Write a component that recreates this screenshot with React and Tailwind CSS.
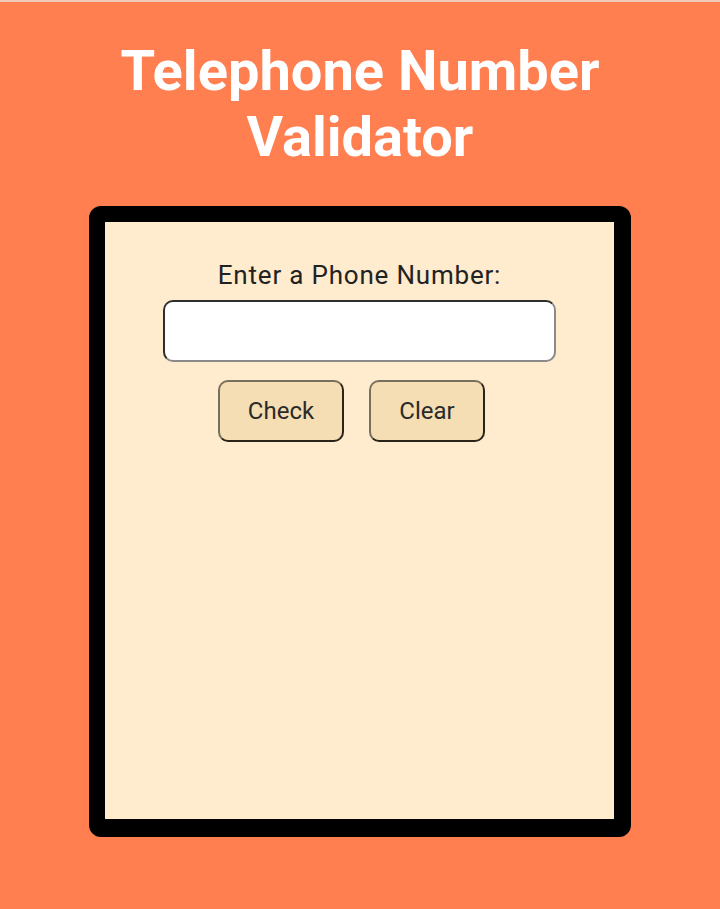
export default function App() {
  return (
    <div className="min-h-[909px] bg-[#ff7f50] border-t-2 border-[#f0c9b8] flex flex-col items-center font-['Roboto',sans-serif]">
      <h1 className="mt-[36px] w-[560px] text-center text-[56px] leading-[66px] font-bold text-white">
        Telephone Number Validator
      </h1>
      <div className="mt-[36px] w-[542px] h-[631px] bg-[#ffebcd] border-[16px] border-b-[18px] border-r-[17px] border-black rounded-[12px] flex flex-col items-center">
        <label className="mt-[38px] text-[26px] leading-[30px] tracking-[0.8px] text-[#222]">
          Enter a Phone Number:
        </label>
        <input
          type="text"
          className="mt-[10px] w-[393px] h-[62px] bg-white rounded-[10px] border-2 border-t-[#2e2e2e] border-l-[#2e2e2e] border-b-[#8a8a8a] border-r-[#8a8a8a] outline-none px-3 text-[20px]"
        />
        <div className="mt-[18px] mr-[16px] flex gap-[25px]">
          <button className="w-[126px] h-[62px] bg-[#f5deb3] rounded-[10px] border-2 border-t-[#77705f] border-l-[#77705f] border-b-[#2a2418] border-r-[#2a2418] text-[24px] text-[#2a2a2a]">
            Check
          </button>
          <button className="w-[116px] h-[62px] bg-[#f5deb3] rounded-[10px] border-2 border-t-[#77705f] border-l-[#77705f] border-b-[#2a2418] border-r-[#2a2418] text-[24px] text-[#2a2a2a]">
            Clear
          </button>
        </div>
      </div>
    </div>
  );
}
